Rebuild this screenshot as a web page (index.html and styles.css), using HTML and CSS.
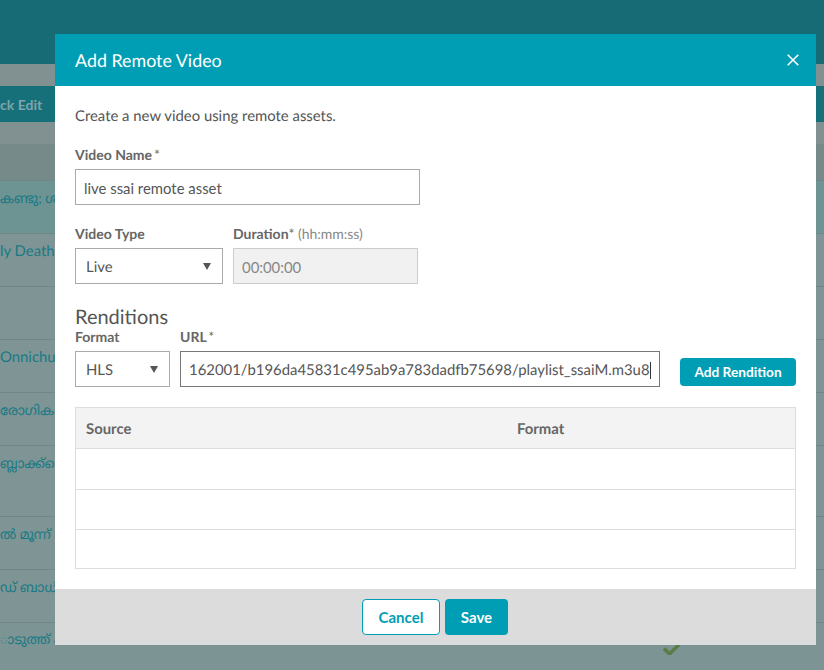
FILE: index.html
```html
<!DOCTYPE html>
<html lang="en">
<head>
  <meta charset="UTF-8">
  <title>Add Remote Video</title>
  <link rel="stylesheet" href="styles.css">
</head>
<body>
  <!-- Dimmed page behind the modal -->
  <div class="page">
    <div class="topbar"></div>
    <div class="toolbar">
      <button class="quick-edit">ck Edit</button>
    </div>
    <div class="row row-head"></div>
    <div class="row row-active"><span class="title ml">കണ്ടു; ശ</span></div>
    <div class="row"><span class="title">ly Death</span></div>
    <div class="row"></div>
    <div class="row"><span class="title">Onnichu</span></div>
    <div class="row"><span class="title ml">രോഗികൾ</span></div>
    <div class="row row-tall"><span class="title ml">ബ്ലാക്ക്മെ</span></div>
    <div class="row"><span class="title ml">ൽ മൂന്ന് മ</span></div>
    <div class="row"><span class="title ml">ഡ് ബാധിര</span></div>
    <div class="row row-last">
      <span class="title ml">ാടുത്ത് ക</span>
      <svg class="check" width="17" height="13" viewBox="0 0 17 13"><path d="M1 6.5 6.5 12 16 2.5" fill="none" stroke="#5a7d45" stroke-width="3.6"/></svg>
    </div>
  </div>

  <div class="modal">
    <div class="modal-header">
      <h1>Add Remote Video</h1>
      <svg class="close" width="12" height="12" viewBox="0 0 12 12"><path d="M.7.7l10.6 10.6M11.3.7.7 11.3" stroke="#fff" stroke-width="1.6"/></svg>
    </div>

    <div class="modal-body">
      <p class="intro">Create a new video using remote assets.</p>

      <label class="field-label">Video Name <span class="req">*</span></label>
      <input class="input input-name" value="live ssai remote asset">

      <div class="form-row type-row">
        <div>
          <label class="field-label">Video Type</label>
          <div class="select select-type">Live</div>
        </div>
        <div>
          <label class="field-label">Duration<span class="req req-tight">*</span> <span class="hint">(hh:mm:ss)</span></label>
          <input class="input input-duration" value="00:00:00" disabled>
        </div>
      </div>

      <h2>Renditions</h2>
      <div class="form-row rendition-row">
        <div>
          <label class="field-label">Format</label>
          <div class="select select-format">HLS</div>
        </div>
        <div>
          <label class="field-label">URL <span class="req">*</span></label>
          <div class="input input-url">162001/b196da45831c495ab9a783dadfb75698/playlist_ssaiM.m3u8<span class="caret"></span></div>
        </div>
        <button class="btn btn-add">Add Rendition</button>
      </div>

      <div class="sources">
        <div class="sources-row sources-head">
          <div class="col-source">Source</div>
          <div>Format</div>
        </div>
        <div class="sources-row"></div>
        <div class="sources-row sources-row-mid"></div>
        <div class="sources-row sources-row-end"></div>
      </div>
    </div>

    <div class="modal-footer">
      <button class="btn btn-cancel">Cancel</button>
      <button class="btn btn-save">Save</button>
    </div>
  </div>
</body>
</html>
```

FILE: styles.css
```css
/* Basic reset */
html, body {
  margin: 0;
  padding: 0;
  height: 100%;
  overflow: hidden;
  font-family: Lato, "Noto Sans Malayalam", "Noto Sans", sans-serif;
  text-rendering: geometricPrecision;
}

/* Page behind the modal, colours already dimmed */
.page {
  height: 670px;
  overflow: hidden;
  background-color: #7c9494;
}

.topbar {
  height: 64px;
  background-color: #176b75;
}

.toolbar {
  height: 81px;
  padding-top: 22px;
  box-sizing: border-box;
  background-color: #819191;
  border-bottom: 1px solid #748888;
}

.quick-edit {
  display: block;
  width: 100%;
  height: 36px;
  padding: 0;
  border: none;
  text-align: left;
  font-family: inherit;
  font-size: 14px;
  font-weight: 700;
  color: #80a4a9;
  background-color: #16707a;
}

.row {
  display: flex;
  align-items: flex-start;
  height: 53px;
  padding-top: 7px;
  box-sizing: border-box;
  border-bottom: 1px solid #6f8787;
  background-color: #7f9595;
  font-size: 14.88px;
  line-height: 20px;
  color: #187a85;
}

.row-head {
  height: 36px;
  background-color: #768a8a;
}

.row-active {
  background-color: #6d9393;
}

.row-tall {
  height: 71px;
}

.row-last {
  height: 47px;
  padding-top: 6px;
  border-bottom: none;
  background-color: #7c9494;
}

.title {
  white-space: nowrap;
  width: 663px;
  flex-shrink: 0;
  overflow: hidden;
}

/* Malayalam titles run a bit smaller than the latin ones */
.ml {
  font-size: 13.5px;
}

.check {
  margin-top: 13px;
}

/* Modal */
.modal {
  position: absolute;
  left: 55px;
  top: 34px;
  width: 761px;
  height: 611px;
  display: flex;
  flex-direction: column;
  background-color: #fff;
  color: #555;
}

.modal-header {
  display: flex;
  align-items: center;
  justify-content: space-between;
  height: 52px;
  padding: 0 17px 0 20px;
  flex-shrink: 0;
  background-color: #009eb4;
}

.modal-header h1 {
  margin: 0;
  font-size: 17.85px;
  font-weight: 400;
  color: #fff;
}

.modal-body {
  flex: 1;
  padding: 20px 20px 0;
}

.intro {
  margin: 0 0 19px;
  font-size: 14.88px;
  line-height: 20px;
}

.field-label {
  display: block;
  height: 20px;
  margin-bottom: 4px;
  font-size: 14px;
  line-height: 20px;
  font-weight: 700;
  color: #666;
}

.req {
  margin-left: -1.5px;
  font-weight: 400;
}

.req-tight {
  margin-left: 0;
}

.hint {
  font-size: 14px;
  font-weight: 400;
  color: #888;
}

.input, .select {
  display: block;
  height: 36px;
  padding: 0 8px;
  box-sizing: border-box;
  border: 1px solid #aaa;
  border-radius: 0;
  font-family: inherit;
  font-size: 14.88px;
  line-height: 36px;
  color: #555;
  background-color: #fff;
}

input.input {
  padding-top: 1px;
}

.input-name {
  width: 345px;
}

.input-duration {
  width: 185px;
  border-color: #ccc;
  color: #888;
  background-color: #f1f1f1;
}

.input-url {
  width: 480px;
  border-color: #777;
  white-space: nowrap;
  overflow: hidden;
}

.caret {
  display: inline-block;
  width: 1px;
  height: 17px;
  vertical-align: -4px;
  background-color: #333;
}

.select {
  position: relative;
  padding-left: 10px;
}

/* Arrow of the select box */
.select::after {
  content: "";
  position: absolute;
  top: 14px;
  right: 11px;
  border-left: 4px solid transparent;
  border-right: 4px solid transparent;
  border-top: 7px solid #555;
}

.select-type {
  width: 148px;
}

.select-format {
  width: 95px;
}

.form-row {
  display: flex;
  gap: 10px;
}

.type-row {
  margin-top: 19px;
}

h2 {
  margin: 21px 0 0;
  font-size: 20px;
  font-weight: 400;
  line-height: 24px;
  color: #555;
}

.rendition-row {
  margin-top: -2px;
}

.btn {
  border-radius: 4px;
  font-family: inherit;
  font-size: 15px;
  font-weight: 700;
}

.btn-add {
  width: 116px;
  height: 28px;
  margin: 31px 0 0 10px;
  padding: 0 0 2px;
  border: none;
  font-size: 13.7px;
  color: #fff;
  background-color: #009eb4;
}

.sources {
  margin-top: 20px;
  border: 1px solid #ddd;
}

.sources-row {
  display: flex;
  height: 41px;
  border-bottom: 1px solid #ddd;
  box-sizing: border-box;
}

.sources-row-mid {
  height: 40px;
}

.sources-row-end {
  height: 38px;
  border-bottom: none;
}

.sources-head {
  padding-left: 10px;
  font-size: 14.88px;
  line-height: 42px;
  font-weight: 700;
  color: #666;
  background-color: #f3f3f3;
}

.col-source {
  width: 431px;
}

.modal-footer {
  display: flex;
  justify-content: center;
  gap: 5px;
  height: 56px;
  padding: 10px 1px 0 0;
  box-sizing: border-box;
  flex-shrink: 0;
  background-color: #dcdcdc;
}

.btn-cancel, .btn-save {
  height: 36px;
  padding: 0;
}

.btn-cancel {
  width: 78px;
  border: 1px solid #009eb4;
  color: #009eb4;
  background-color: #fff;
}

.btn-save {
  width: 63px;
  border: none;
  color: #fff;
  background-color: #009eb4;
}
```
